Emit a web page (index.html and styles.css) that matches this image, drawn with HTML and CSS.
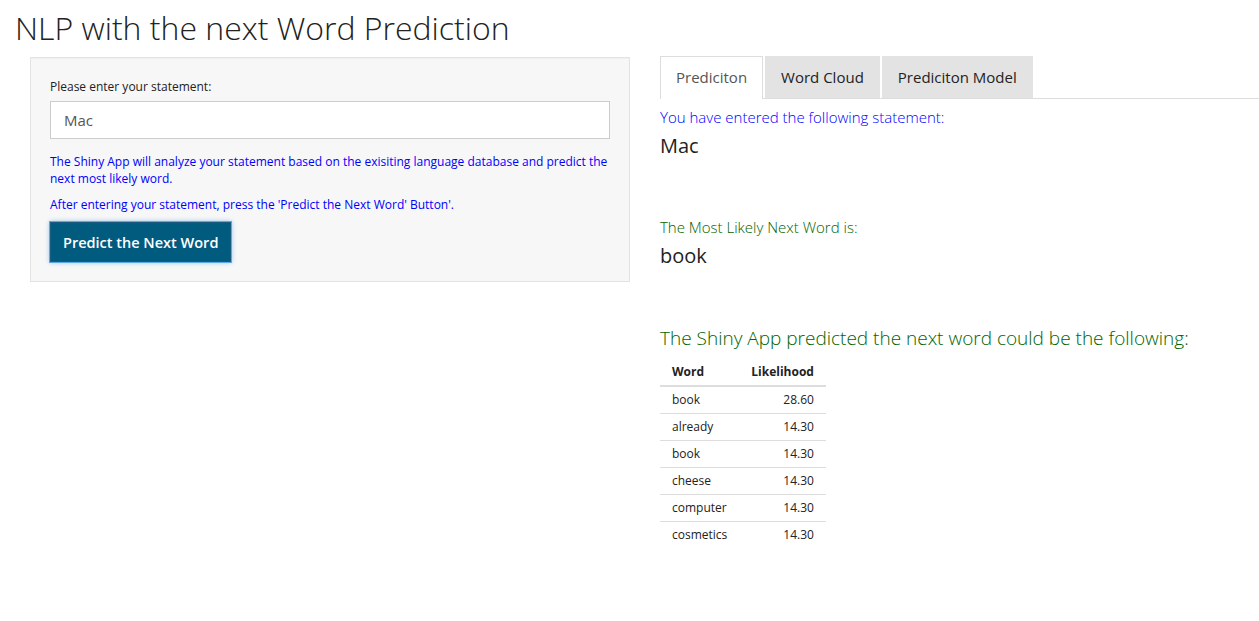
FILE: index.html
```html
<!DOCTYPE html>
<html>
<head>
<meta charset="utf-8">
<link rel="stylesheet" href="styles.css">
</head>
<body>
<div class="page">
  <h2 class="title">NLP with the next Word Prediction</h2>
  <div class="row">
    <div class="side">
      <div class="well">
        <label class="lbl">Please enter your statement:</label>
        <div class="input">Mac</div>
        <p class="note">The Shiny App will analyze your statement based on the exisiting language database and predict the next most likely word.</p>
        <p class="note">After entering your statement, press the 'Predict the Next Word' Button'.</p>
        <button class="btn">Predict the Next Word</button>
      </div>
    </div>
    <div class="main">
      <ul class="tabs">
        <li class="tab active">Prediciton</li>
        <li class="tab">Word Cloud</li>
        <li class="tab">Prediciton Model</li>
      </ul>
      <div class="pane">
        <div class="h-blue">You have entered the following statement:</div>
        <div class="val">Mac</div>
        <div class="h-green">The Most Likely Next Word is:</div>
        <div class="val">book</div>
        <div class="h-big">The Shiny App predicted the next word could be the following:</div>
        <table class="tbl">
          <thead><tr><th class="l">Word</th><th class="r">Likelihood</th></tr></thead>
          <tbody>
            <tr><td class="l">book</td><td class="r">28.60</td></tr>
            <tr><td class="l">already</td><td class="r">14.30</td></tr>
            <tr><td class="l">book</td><td class="r">14.30</td></tr>
            <tr><td class="l">cheese</td><td class="r">14.30</td></tr>
            <tr><td class="l">computer</td><td class="r">14.30</td></tr>
            <tr><td class="l">cosmetics</td><td class="r">14.30</td></tr>
          </tbody>
        </table>
      </div>
    </div>
  </div>
</div>
</body>
</html>
```
FILE: styles.css
```css
html, body {
  margin: 0;
  padding: 0;
  background: #fff;
  font-family: "Open Sans", "DejaVu Sans", sans-serif;
  color: #222;
  overflow: hidden;
}
.page {
  padding: 0 0 0 15px;
}
.title {
  margin: 0;
  padding-top: 8px;
  font-size: 32px;
  font-weight: 300;
  line-height: 40px;
  color: #222;
  height: 49px;
}
.row {
  display: flex;
  gap: 30px;
}
.side {
  width: 600px;
  flex: none;
  padding-left: 15px;
}
.well {
  background: #f7f7f7;
  border: 1px solid #e3e3e3;
  padding: 19px 19px 19px 19px;
  box-shadow: inset 0 1px 1px rgba(0,0,0,0.03);
}
.lbl {
  display: block;
  font-size: 12px;
  line-height: 20px;
  color: #222;
  margin-bottom: 4px;
}
.input {
  height: 38px;
  box-sizing: border-box;
  border: 1px solid #ccc;
  background: #fff;
  padding: 0 13px;
  font-size: 15px;
  line-height: 36px;
  color: #555;
  margin-bottom: 14px;
}
.note {
  margin: 0 0 9px 0;
  font-size: 12px;
  line-height: 17px;
  color: #0000ff;
}
.btn {
  display: block;
  margin-top: 9px;
  height: 40px;
  padding: 0 12px;
  background: #005b7f;
  border: 1px solid #1a5c80;
  box-shadow: 0 0 0 1px #5fa8e8, 0 0 5px rgba(80,160,235,0.8);
  color: #fff;
  font-family: "Open Sans", sans-serif;
  font-weight: 600;
  font-size: 14.5px;
}
.main {
  flex: 1;
  min-width: 0;
}
.tabs {
  list-style: none;
  margin: 0;
  padding: 0;
  display: flex;
  gap: 2px;
  border-bottom: 1px solid #ddd;
  height: 42px;
  margin-top: -1px;
}
.tab {
  box-sizing: border-box;
  height: 42px;
  padding: 0 15px;
  line-height: 40px;
  font-size: 15px;
  background: #e3e3e3;
  color: #222;
  border: 1px solid transparent;
  border-bottom: none;
}
.tab.active {
  background: #fff;
  border-color: #ddd;
  color: #555;
  height: 43px;
}
.pane {
  padding-top: 8px;
}
.h-blue {
  font-size: 15px;
  font-weight: 300;
  color: #0000ff;
  line-height: 21px;
}
.val {
  font-size: 20px;
  line-height: 28px;
  margin-top: 4px;
  color: #222;
}
.h-green {
  font-size: 15px;
  font-weight: 300;
  color: #006400;
  line-height: 21px;
  margin-top: 57px;
}
.h-big {
  font-size: 19px;
  font-weight: 300;
  color: #006400;
  line-height: 28px;
  margin-top: 54px;
}
.tbl {
  margin-top: 7px;
  border-collapse: collapse;
  font-size: 12px;
  color: #222;
}
.tbl th, .tbl td {
  padding: 5px 12px;
  line-height: 16px;
}
.tbl th {
  font-weight: 700;
  border-bottom: 2px solid #ddd;
}
.tbl td {
  border-bottom: 1px solid #ddd;
}
.tbl tbody tr:last-child td {
  border-bottom: none;
}
.tbl .l { text-align: left; }
.tbl .r { text-align: right; }
```
